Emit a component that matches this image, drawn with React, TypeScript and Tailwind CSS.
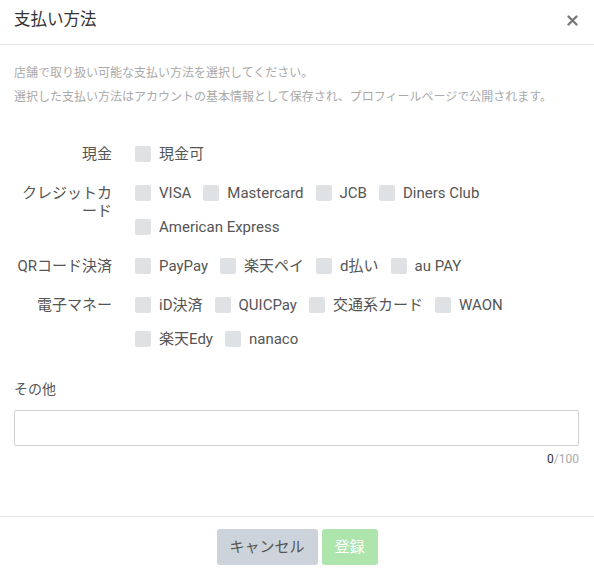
import React from "react";

interface Group {
  label: string[];
  options: string[];
  // options that start on the second line
  wrapAt?: number;
}

const groups: Group[] = [
  { label: ["現金"], options: ["現金可"] },
  { label: ["クレジットカ", "ード"], options: ["VISA", "Mastercard", "JCB", "Diners Club", "American Express"], wrapAt: 4 },
  { label: ["QRコード決済"], options: ["PayPay", "楽天ペイ", "d払い", "au PAY"] },
  { label: ["電子マネー"], options: ["iD決済", "QUICPay", "交通系カード", "WAON", "楽天Edy", "nanaco"], wrapAt: 4 },
];

const font = { fontFamily: "Roboto, 'Noto Sans CJK JP', sans-serif" };

const Option: React.FC<{ text: string }> = ({ text }) => (
  <label className="flex items-center h-5 cursor-pointer">
    <span className="w-4 h-4 rounded-[2px] bg-[#dfe2e4] mr-2 shrink-0" />
    <span className="text-[15px] text-[#555] leading-5">{text}</span>
  </label>
);

const PaymentMethodsModal: React.FC = () => {
  return (
    <div className="w-[594px] h-[577px] bg-white flex flex-col" style={font}>
      {/* header */}
      <div className="h-[45px] border-b border-[#e5e5e5] flex items-center justify-between pl-[14px] pr-[14px] pb-[4px]">
        <h3 className="text-[16.5px] text-[#333] leading-6">支払い方法</h3>
        <button className="w-4 h-4 flex items-center justify-center text-[#777]">
          <svg width="11" height="11" viewBox="0 0 11 11">
            <path d="M1.5 1.5 L9.5 9.5 M9.5 1.5 L1.5 9.5" stroke="currentColor" strokeWidth="2.3" strokeLinecap="round" />
          </svg>
        </button>
      </div>

      {/* body */}
      <div className="flex-1 pl-[14px] pr-[15px] pt-4">
        <div className="text-xs text-[#aaa] leading-6">
          <p>店舗で取り扱い可能な支払い方法を選択してください。</p>
          <p>選択した支払い方法はアカウントの基本情報として保存され、プロフィールページで公開されます。</p>
        </div>

        <div className="mt-[35px] flex flex-col gap-[19px]">
          {groups.map((g, i) => {
            const first = g.wrapAt ? g.options.slice(0, g.wrapAt) : g.options;
            const rest = g.wrapAt ? g.options.slice(g.wrapAt) : [];
            return (
              <div key={i} className="flex">
                <div className="w-[98px] shrink-0 text-right text-[15px] text-[#555] leading-[18px] pt-[1px]">
                  {g.label.map((l, j) => (
                    <div key={j}>{l}</div>
                  ))}
                </div>
                <div className="ml-[23px] flex flex-col gap-y-[14px]">
                  <div className="flex gap-x-3">
                    {first.map((o) => (
                      <Option key={o} text={o} />
                    ))}
                  </div>
                  {rest.length > 0 && (
                    <div className="flex gap-x-3">
                      {rest.map((o) => (
                        <Option key={o} text={o} />
                      ))}
                    </div>
                  )}
                </div>
              </div>
            );
          })}
        </div>

        <div className="mt-[30px]">
          <div className="text-sm text-[#555] leading-5">その他</div>
          <input className="mt-[11px] w-full h-[36px] border border-[#d0d0d0] rounded-[2px] outline-none px-2 text-sm" />
          <div className="mt-[6px] text-right text-xs leading-[14px]">
            <span className="text-[#333]">0</span>
            <span className="text-[#aaa]">/100</span>
          </div>
        </div>
      </div>

      {/* footer */}
      <div className="border-t border-[#e5e5e5] pt-3 pb-3 flex justify-center gap-1">
        <button className="h-9 w-[101px] rounded-[3px] bg-[#cdd3da] text-[#555] text-[15px]">キャンセル</button>
        <button className="h-9 w-[56px] rounded-[3px] bg-[#ade5ad] text-white text-[15px]">登録</button>
      </div>
    </div>
  );
};

export default function App() {
  return <PaymentMethodsModal />;
}
